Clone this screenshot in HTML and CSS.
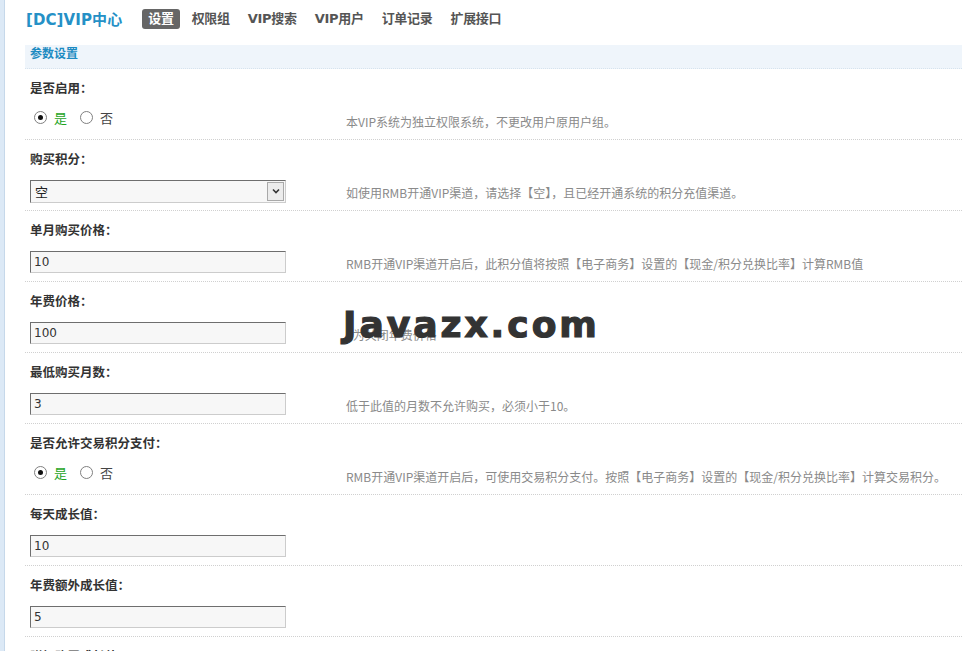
FILE: index.html
```html
<!DOCTYPE html>
<html lang="zh">
<head>
<meta charset="utf-8">
<title>[DC]VIP中心</title>
<link rel="stylesheet" href="styles.css">
</head>
<body>
<div class="page">
  <div class="strip"></div>
  <div class="main">
    <div class="header">
      <div class="title">[DC]VIP中心</div>
      <ul class="tabs">
        <li class="tab active">设置</li>
        <li class="tab">权限组</li>
        <li class="tab">VIP搜索</li>
        <li class="tab">VIP用户</li>
        <li class="tab">订单记录</li>
        <li class="tab">扩展接口</li>
      </ul>
    </div>
    <div class="section-title">参数设置</div>

    <div class="row first">
      <div class="label">是否启用：</div>
      <div class="line">
        <div class="field radios">
          <span class="radio checked"></span><span class="opt yes">是</span>
          <span class="radio"></span><span class="opt">否</span>
        </div>
        <div class="desc">本VIP系统为独立权限系统，不更改用户原用户组。</div>
      </div>
    </div>

    <div class="row">
      <div class="label">购买积分：</div>
      <div class="line">
        <div class="field select"><span class="sel-text">空</span><span class="sel-arrow"><svg width="8" height="6" viewBox="0 0 8 6"><path d="M1 1.5 L4 4.5 L7 1.5" fill="none" stroke="#333" stroke-width="1.6"/></svg></span></div>
        <div class="desc">如使用RMB开通VIP渠道，请选择【空】，且已经开通系统的积分充值渠道。</div>
      </div>
    </div>

    <div class="row">
      <div class="label">单月购买价格：</div>
      <div class="line">
        <input class="field input" type="text" value="10">
        <div class="desc">RMB开通VIP渠道开启后，此积分值将按照【电子商务】设置的【现金/积分兑换比率】计算RMB值</div>
      </div>
    </div>

    <div class="row">
      <div class="label">年费价格：</div>
      <div class="line">
        <input class="field input" type="text" value="100">
        <div class="desc">0为关闭年费价格</div>
      </div>
    </div>

    <div class="row">
      <div class="label">最低购买月数：</div>
      <div class="line">
        <input class="field input" type="text" value="3">
        <div class="desc">低于此值的月数不允许购买，必须小于10。</div>
      </div>
    </div>

    <div class="row">
      <div class="label">是否允许交易积分支付：</div>
      <div class="line">
        <div class="field radios">
          <span class="radio checked"></span><span class="opt yes">是</span>
          <span class="radio"></span><span class="opt">否</span>
        </div>
        <div class="desc">RMB开通VIP渠道开启后，可使用交易积分支付。按照【电子商务】设置的【现金/积分兑换比率】计算交易积分。</div>
      </div>
    </div>

    <div class="row">
      <div class="label">每天成长值：</div>
      <div class="line">
        <input class="field input" type="text" value="10">
      </div>
    </div>

    <div class="row">
      <div class="label">年费额外成长值：</div>
      <div class="line">
        <input class="field input" type="text" value="5">
      </div>
    </div>

    <div class="row">
      <div class="label">附加购买成长值：</div>
      <div class="line">
        <input class="field input" type="text" value="0">
      </div>
    </div>
  </div>
  <div class="watermark">Javazx.com</div>
</div>
</body>
</html>
```

FILE: styles.css
```css
html { overflow: hidden; }
body {
  margin: 0;
  background: #fff;
  font-family: "Noto Sans CJK SC", "DejaVu Sans", sans-serif;
  font-size: 12px;
  color: #333;
}
.page {
  display: flex;
  min-height: 651px;
  position: relative;
}
.strip {
  width: 4px;
  background: #dce9f6;
  border-right: 1px solid #c6d8ea;
  flex: none;
}
.main {
  flex: 1;
  padding-left: 20px;
}
.header {
  display: flex;
  align-items: center;
  height: 45px;
  padding-left: 1px;
  box-sizing: border-box;
  padding-bottom: 8px;
}
.title {
  font-family: "DejaVu Sans", "Noto Sans CJK SC", sans-serif;
  font-weight: bold;
  font-size: 15px;
  color: #2590c6;
  margin-right: 20px;
  letter-spacing: 0.1px;
}
.tabs {
  display: flex;
  list-style: none;
  margin: 0;
  padding: 0;
  gap: 6px;
}
.tab {
  font-family: "DejaVu Sans", "Noto Sans CJK SC", sans-serif;
  font-weight: bold;
  font-size: 13px;
  color: #555;
  height: 20px;
  line-height: 20px;
  padding: 0 6px;
  border-radius: 3px;
  letter-spacing: -0.3px;
}
.tab.active {
  background: #666;
  color: #fff;
}
.section-title {
  background: #eff5fb;
  height: 23px;
  line-height: 16px;
  padding-left: 5px;
  font-weight: bold;
  font-size: 12px;
  color: #1d8bc2;
  border-bottom: 1px dotted #d6e3ee;
}
.row {
  padding: 9px 0 8px 5px;
  border-bottom: 1px dotted #d0d0d0;
}
.label {
  height: 20px;
  line-height: 20px;
  font-weight: bold;
  font-size: 12.5px;
  color: #333;
}
.line {
  display: flex;
  align-items: center;
  height: 22px;
  margin-top: 11px;
}
.field {
  width: 256px;
  height: 22px;
  box-sizing: border-box;
  flex: none;
}
.input {
  margin: 0;
  border: 1px solid #ccc;
  border-top-color: #6e6e6e;
  border-left-color: #6e6e6e;
  background: #f7f7f7;
  font-family: "DejaVu Sans", sans-serif;
  font-size: 12px;
  color: #333;
  padding: 0 3px;
  outline: none;
}
.select {
  display: flex;
  height: 23px;
  border: 1px solid #ccc;
  border-top-color: #6e6e6e;
  border-left-color: #6e6e6e;
  background: #f7f7f7;
  padding: 1px;
}
.sel-text {
  flex: 1;
  line-height: 19px;
  padding-left: 3px;
  font-size: 13px;
  color: #222;
}
.sel-arrow {
  width: 15px;
  border: 1px solid #a9a9a9;
  background: #ececec;
  display: flex;
  align-items: center;
  justify-content: center;
}
.radios {
  display: flex;
  align-items: center;
  align-self: flex-start;
  height: 16px;
  padding-left: 4px;
}
.radio {
  width: 11px;
  height: 11px;
  border: 1px solid #808080;
  border-radius: 50%;
  background: #fff;
  display: flex;
  align-items: center;
  justify-content: center;
  margin-right: 7px;
}
.radio.checked::after {
  content: "";
  width: 5px;
  height: 5px;
  border-radius: 50%;
  background: #111;
}
.opt {
  font-size: 13px;
  color: #444;
  margin-right: 13px;
}
.opt.yes {
  color: #1ea41e;
}
.desc {
  margin-left: 60px;
  color: #8a8a8a;
  font-size: 12px;
  white-space: nowrap;
  padding-top: 3px;
}
.watermark {
  position: absolute;
  left: 343px;
  top: 305px;
  font-family: "DejaVu Sans", sans-serif;
  font-weight: bold;
  font-size: 36px;
  line-height: 40px;
  color: #333;
  letter-spacing: 3px;
  -webkit-text-stroke: 1.2px #333;
}
```
